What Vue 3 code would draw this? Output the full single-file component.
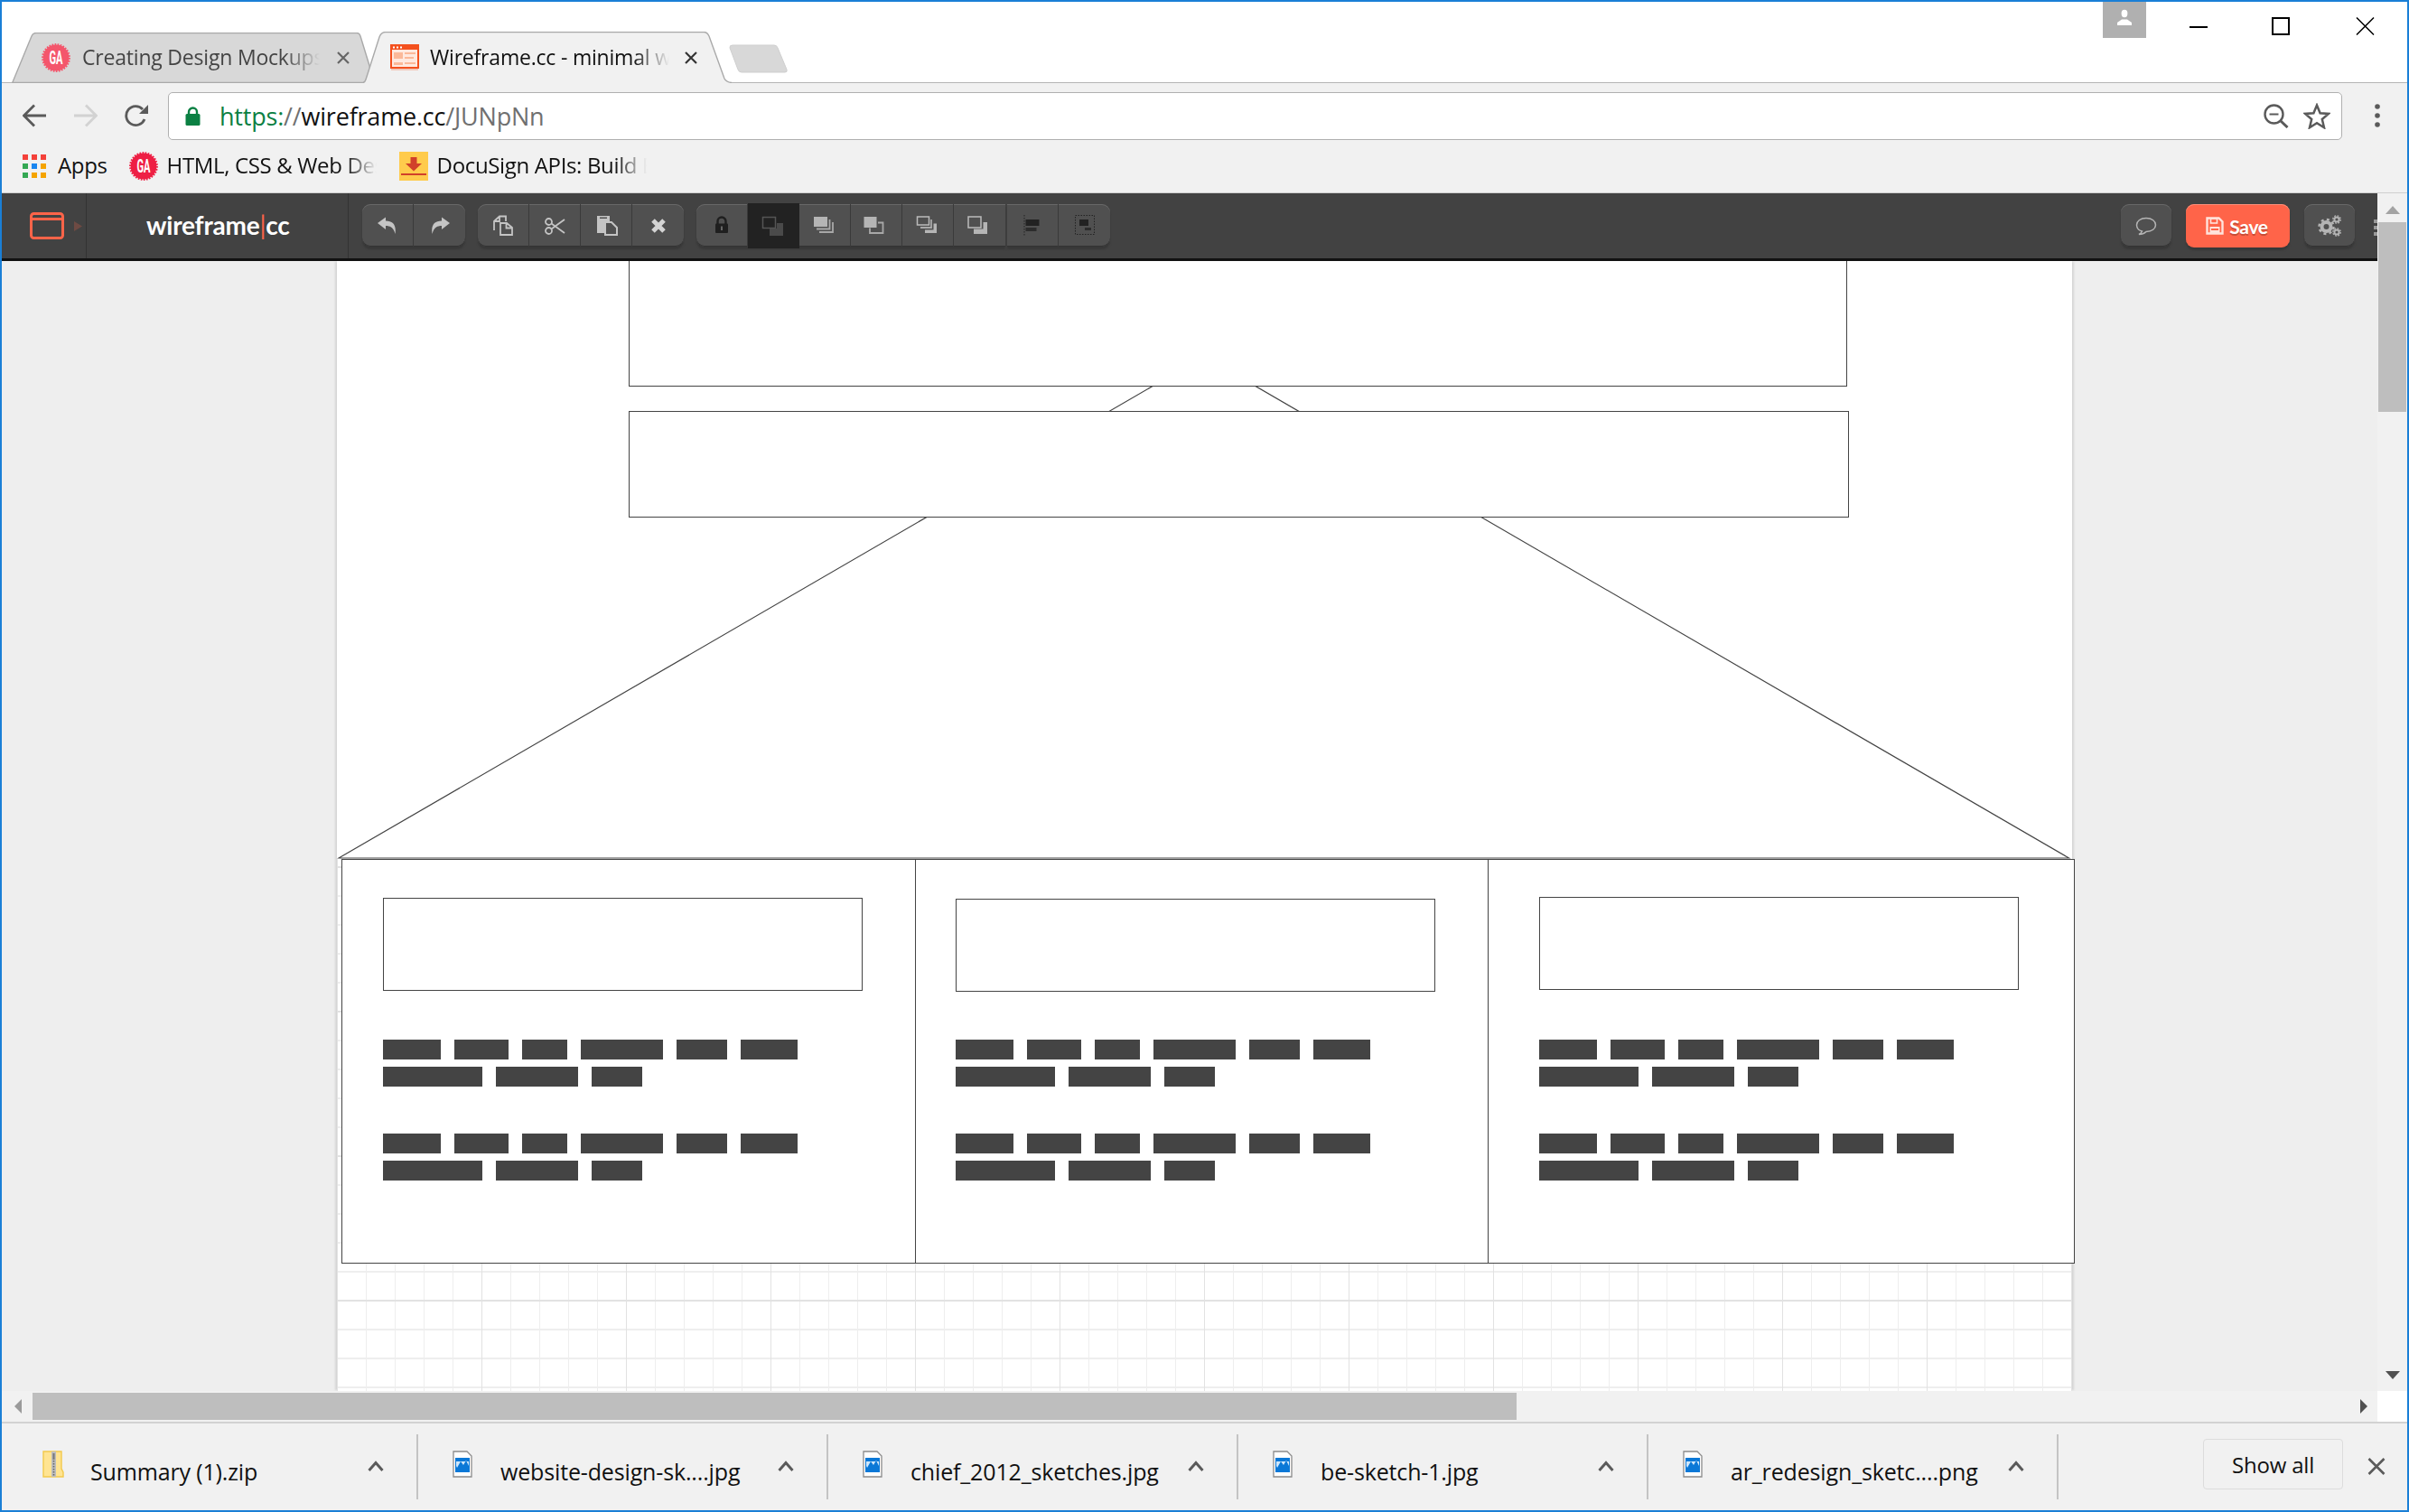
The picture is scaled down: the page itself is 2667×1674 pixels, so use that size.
<template>
  <div class="window">
    <!-- tab strip -->
    <div class="tabstrip">
      <div class="tab tab-off">
        <svg class="tab-bg" width="397" height="56" viewBox="0 0 397 56">
          <path d="M0.5 56 L22 4 Q23.5 0.5 27 0.5 H382 Q385 0.5 386 4 L397 40 L391 55.5 H0.5 Z" fill="#d8d8d8" stroke="#a9a9a9" stroke-width="1.4" />
        </svg>
        <svg class="fav-off" width="32" height="32" viewBox="0 0 32 32">
          <circle cx="16" cy="16" r="14.4" fill="#f4566c" stroke="#f4566c" stroke-width="3" stroke-dasharray="1.6 1.4" />
          <text x="16" y="23" text-anchor="middle" class="ga-text" textLength="15" lengthAdjust="spacingAndGlyphs">GA</text>
        </svg>
        <span class="tab-title title-off">Creating Design Mockups</span>
        <svg class="tab-x" width="14" height="14" viewBox="0 0 14 14"><path d="M1 1 13 13M13 1 1 13" stroke="#666" stroke-width="2.2" /></svg>
      </div>
      <div class="tab tab-on">
        <svg class="tab-bg" width="408" height="57" viewBox="0 0 408 57">
          <path d="M0 57 Q2 56 3 53 L18 6 Q20 0.5 25 0.5 H377 Q381 0.5 383 5 L400 52 Q402 56 408 56.5 V57 Z" fill="#f1f1f1" />
          <path d="M0 56.5 Q2 56 3 53 L18 6 Q20 0.5 25 0.5 H377 Q381 0.5 383 5 L400 52 Q402 56 408 56.5" fill="none" stroke="#a9a9a9" stroke-width="1.4" />
        </svg>
        <svg class="fav-on" width="32" height="30" viewBox="0 0 32 30">
          <rect x="1" y="1" width="30" height="25" fill="#ffe9df" stroke="#f4511e" stroke-width="2" />
          <rect x="1" y="1" width="30" height="5" fill="#f4511e" />
          <rect x="3" y="2.5" width="2" height="2" fill="#fff" /><rect x="7" y="2.5" width="2" height="2" fill="#fff" /><rect x="11" y="2.5" width="2" height="2" fill="#fff" />
          <rect x="4" y="9" width="10" height="7" fill="#fbb999" />
          <rect x="16" y="9" width="12" height="2" fill="#fbb999" /><rect x="16" y="14" width="10" height="2" fill="#fbb999" />
          <rect x="4" y="20" width="10" height="3" fill="#fbb999" /><rect x="16" y="20" width="12" height="2" fill="#fbb999" />
          <rect x="1" y="27" width="30" height="2" fill="#f2c9bb" />
        </svg>
        <span class="tab-title title-on">Wireframe.cc - minimal wireframing</span>
        <svg class="tab-x" width="14" height="14" viewBox="0 0 14 14"><path d="M1 1 13 13M13 1 1 13" stroke="#333" stroke-width="2.2" /></svg>
      </div>
      <svg class="newtab" width="66" height="32" viewBox="0 0 66 32">
        <path d="M1 4 Q0.5 1 4 1 H50 Q53 1 54 4 L64 28 Q65 31 62 31 H14 Q11 31 10 28 Z" fill="#d8d8d8" stroke="#cfcfcf" />
      </svg>
      <div class="winctl">
        <div class="user">
          <svg width="20" height="20" viewBox="0 0 20 20"><ellipse cx="10" cy="5" rx="3.4" ry="4.2" fill="#fff" /><path d="M2 18V15L7 11.5H13L18 15V18Z" fill="#fff" /></svg>
        </div>
        <svg class="ctl-min" width="20" height="2" viewBox="0 0 20 2"><rect width="20" height="2" fill="#000" /></svg>
        <svg class="ctl-max" width="20" height="20" viewBox="0 0 20 20"><rect x="1" y="1" width="18" height="18" fill="none" stroke="#000" stroke-width="2" /></svg>
        <svg class="ctl-close" width="21" height="20" viewBox="0 0 21 20"><path d="M1 0.5 20 19.5M20 0.5 1 19.5" stroke="#000" stroke-width="1.5" /></svg>
      </div>
    </div>

    <!-- address bar -->
    <div class="navbar">
      <svg class="nav-back" width="27" height="26" viewBox="0 0 27 26"><path d="M1.5 13H26M13 1.5 1.5 13 13 24.5" fill="none" stroke="#5a5a5a" stroke-width="2.8" /></svg>
      <svg class="nav-fwd" width="27" height="26" viewBox="0 0 27 26"><path d="M25.5 13H1M14 1.5 25.5 13 14 24.5" fill="none" stroke="#d2d2d2" stroke-width="2.8" /></svg>
      <svg class="nav-reload" width="28" height="26" viewBox="0 0 28 26"><path d="M23 17A10.5 10.5 0 1 1 21 6" fill="none" stroke="#5a5a5a" stroke-width="2.8" /><path d="M27 1V11H17Z" fill="#5a5a5a" /></svg>
      <div class="omnibox">
        <svg width="17" height="21" viewBox="0 0 17 21" class="lock"><path d="M4 9V6A4.5 4.5 0 0 1 13 6V9" fill="none" stroke="#0b8043" stroke-width="2.4" /><rect x="0.5" y="8" width="16" height="13" rx="1.5" fill="#0b8043" /></svg>
        <span class="url"><span class="u-green">https:</span><span class="u-grey">//</span>wireframe.cc<span class="u-grey">/JUNpNn</span></span>
        <svg class="omni-zoom" width="28" height="27" viewBox="0 0 28 27"><circle cx="11.5" cy="11.5" r="10" fill="none" stroke="#5a5a5a" stroke-width="2.4" /><path d="M6.5 11.5H16.5" stroke="#5a5a5a" stroke-width="2" /><path d="M18.5 18.5 26.5 26" stroke="#5a5a5a" stroke-width="3" /></svg>
        <svg class="omni-star" width="30" height="29" viewBox="0 0 30 29"><path d="M15 2.5 18.6 11.2 28 11.9 20.8 18 23 27.2 15 22.3 7 27.2 9.2 18 2 11.9 11.4 11.2Z" fill="none" stroke="#5a5a5a" stroke-width="2.5" /></svg>
      </div>
      <svg class="nav-menu" width="6" height="26" viewBox="0 0 6 26"><circle cx="3" cy="3" r="2.8" fill="#5a5a5a" /><circle cx="3" cy="13" r="2.8" fill="#5a5a5a" /><circle cx="3" cy="23" r="2.8" fill="#5a5a5a" /></svg>
    </div>

    <!-- bookmarks -->
    <div class="bookmarks">
      <div class="apps">
        <span v-for="(c, i) in appDots" :key="i" class="app-dot" :style="{ background: c }"></span>
      </div>
      <span class="bm-apps">Apps</span>
      <svg class="bm-ga" width="32" height="32" viewBox="0 0 32 32">
        <circle cx="16" cy="16" r="14.4" fill="#ee1f44" stroke="#ee1f44" stroke-width="3" stroke-dasharray="1.6 1.4" />
        <text x="16" y="23" text-anchor="middle" class="ga-text" textLength="15" lengthAdjust="spacingAndGlyphs">GA</text>
      </svg>
      <span class="bm-title bm-html">HTML, CSS &amp; Web Design</span>
      <svg class="bm-doc" width="32" height="32" viewBox="0 0 32 32">
        <rect width="32" height="32" fill="#ffcb4c" />
        <path d="M12.5 6H19.5V13H25L16 21.5 7 13H12.5Z" fill="#d1402a" />
        <rect x="2" y="24" width="28" height="2" fill="#d1402a" />
      </svg>
      <span class="bm-title bm-docu">DocuSign APIs: Build Better</span>
    </div>

    <div class="stage">
      <div class="main">
        <!-- wireframe.cc toolbar -->
        <div class="apptool">
          <div class="logo-cell">
            <svg width="38" height="30" viewBox="0 0 38 30"><rect x="1.5" y="1.5" width="35" height="27" rx="3" fill="none" stroke="#ff6449" stroke-width="3" /><rect x="2" y="6" width="34" height="3" fill="#ff6449" /></svg>
            <svg class="logo-tri" width="9" height="11" viewBox="0 0 9 11"><path d="M0 0 9 5.5 0 11Z" fill="#6e4a43" /></svg>
          </div>
          <div class="brand"><span class="brand-text">wireframe<span class="pipe">|</span>cc</span></div>
          <div class="groups">
            <div class="group rounded">
              <div class="tool"><svg width="32" height="32" viewBox="0 0 32 32"><path d="M5 13 14 6.5V10.5C22 10.5 26 15 24.5 25 23 19 20 16 14 16V20Z" class="ico" /></svg></div>
              <div class="tool"><svg width="32" height="32" viewBox="0 0 32 32"><path d="M27 13 18 6.5V10.5C10 10.5 6 15 7.5 25 9 19 12 16 18 16V20Z" class="ico" /></svg></div>
            </div>
            <div class="group rounded">
              <div class="tool"><svg width="32" height="32" viewBox="0 0 32 32"><path d="M6 21V11L12 5.5H19V11M13 13H20L26 18V26H13ZM19.5 13.5V18.5H25.5M6.5 11H12V6" class="line" /></svg></div>
              <div class="tool"><svg width="32" height="32" viewBox="0 0 32 32"><circle cx="9.5" cy="11.5" r="3.5" class="line" /><circle cx="9.5" cy="21.5" r="3.5" class="line" /><path d="M12.5 13.5 27 24M12.5 19.5 27 9" class="line" /></svg></div>
              <div class="tool"><svg width="32" height="32" viewBox="0 0 32 32"><rect x="6" y="5" width="14" height="19" class="ico" /><rect x="9" y="6.5" width="8" height="1.5" fill="#505050" /><path d="M15 12H22L28 18V26H15Z" fill="#505050" stroke="#c4c4c4" stroke-width="2" /></svg></div>
              <div class="tool"><svg width="32" height="32" viewBox="0 0 32 32"><path d="M10 10 22 22M22 10 10 22" stroke="#d4d4d4" stroke-width="5" /></svg></div>
            </div>
            <div class="group left">
              <div class="tool"><svg width="32" height="32" viewBox="0 0 32 32"><path d="M11.5 14V11A4.5 4.5 0 0 1 20.5 11V14" fill="none" stroke="#1f1f1f" stroke-width="2.4" /><rect x="9" y="13.5" width="14" height="10.5" rx="1" fill="#1f1f1f" /><rect x="15" y="16.5" width="2" height="4.5" fill="#666" /></svg></div>
              <div class="tool active"><svg width="32" height="32" viewBox="0 0 32 32"><path d="M14 19H19V13H26V27H11V19Z" fill="#4a4a4a" /><rect x="3.5" y="6.5" width="14" height="12" fill="none" stroke="#555" stroke-width="1.5" /></svg></div>
              <div class="tool"><svg width="32" height="32" viewBox="0 0 32 32"><rect x="4" y="6" width="15" height="11" fill="#b5b5b5" /><path d="M7 19.5H21.5V9M10 23H25V12" class="thin" /></svg></div>
              <div class="tool"><svg width="32" height="32" viewBox="0 0 32 32"><rect x="2.5" y="6" width="14" height="12" fill="#b5b5b5" /><path d="M18 12.5H23.5V24H9V18.5" class="thin" /></svg></div>
              <div class="tool"><svg width="32" height="32" viewBox="0 0 32 32"><rect x="4.5" y="6" width="13" height="9" fill="none" stroke="#bbb" stroke-width="1.5" /><path d="M8 18H20V9" class="thin" /><path d="M22.5 13.5H26V24H13V20.5H22.5Z" fill="#b5b5b5" /></svg></div>
              <div class="tool"><svg width="32" height="32" viewBox="0 0 32 32"><rect x="3" y="6" width="14" height="12" fill="none" stroke="#bbb" stroke-width="1.5" /><path d="M19.5 12H24V25H9V19.5H19.5Z" fill="#b5b5b5" /></svg></div>
            </div>
            <div class="group right">
              <div class="tool"><svg width="32" height="32" viewBox="0 0 32 32"><path d="M7 4V27" stroke="#222" stroke-width="1" stroke-dasharray="1.5 1.5" /><rect x="8.5" y="9" width="15" height="7" fill="#222" /><rect x="8.5" y="18" width="12" height="4" fill="#2c2c2c" /></svg></div>
              <div class="tool"><svg width="32" height="32" viewBox="0 0 32 32"><rect x="5.5" y="4.5" width="21" height="21" fill="none" stroke="#222" stroke-dasharray="1.5 1.5" /><rect x="10" y="9" width="10" height="7" fill="#222" /><rect x="16" y="18" width="7" height="3" fill="#2c2c2c" /></svg></div>
            </div>
          </div>
          <div class="actions">
            <div class="single"><svg width="30" height="30" viewBox="0 0 30 30"><path d="M15 6.5C8.5 6.5 4.5 10 4.5 14S7.5 20.5 10.5 21C10 22.5 9 23.5 7 24.5 10.5 24.5 13 23.5 15 21.5 21.5 21.5 25.5 18 25.5 14S21.5 6.5 15 6.5Z" fill="none" stroke="#b5b5b5" stroke-width="1.5" /></svg></div>
            <div class="save">
              <svg width="20" height="20" viewBox="0 0 20 20"><path d="M1.5 1.5H14.5L18.5 5.5V18.5H1.5Z" fill="none" stroke="#ffe3dc" stroke-width="2.4" /><rect x="5.5" y="2" width="7" height="5" fill="none" stroke="#ffe3dc" stroke-width="1.6" /><rect x="4.5" y="11" width="11" height="7" fill="#ffe3dc" /><rect x="6" y="13" width="8" height="2" fill="#ff6449" /></svg>
              <span>Save</span>
            </div>
            <div class="single gear">
              <svg width="26" height="24" viewBox="0 0 26 24">
                <circle cx="9.5" cy="13" r="5" fill="none" stroke="#b5b5b5" stroke-width="4" />
                <circle cx="9.5" cy="13" r="8" fill="none" stroke="#b5b5b5" stroke-width="2.4" stroke-dasharray="3 3.3" />
                <circle cx="21" cy="5" r="2.6" fill="none" stroke="#b5b5b5" stroke-width="2" />
                <circle cx="21" cy="5" r="4.2" fill="none" stroke="#b5b5b5" stroke-width="1.4" stroke-dasharray="1.8 1.5" />
                <circle cx="21" cy="19" r="2.6" fill="none" stroke="#b5b5b5" stroke-width="2" />
                <circle cx="21" cy="19" r="4.2" fill="none" stroke="#b5b5b5" stroke-width="1.4" stroke-dasharray="1.8 1.5" />
              </svg>
            </div>
            <div class="stub"><i></i><i></i><i></i></div>
          </div>
        </div>
        <div class="blackline"></div>

        <!-- canvas -->
        <div class="canvas">
          <div class="sheet">
            <div class="sheet-top"></div>
            <svg class="tri" width="1921" height="662" viewBox="0 0 1921 662">
              <path d="M2 661 960 105.5 1917.5 661Z" fill="#fff" stroke="#444" stroke-width="1.2" />
            </svg>
            <div class="shape rect-a"></div>
            <div class="shape rect-b"></div>
            <div class="frame">
              <div v-for="col in columns" :key="col.pad" class="frame-col" :style="{ width: col.w + 'px', paddingLeft: col.pad + 'px', paddingTop: col.top + 'px' }">
                <div class="shape col-box" :style="{ marginBottom: col.gap + 'px' }"></div>
                <div v-for="p in 2" :key="p" class="para">
                  <div v-for="(row, ri) in bars" :key="ri" class="bar-row">
                    <span v-for="(b, bi) in row" :key="bi" class="bar" :style="{ width: b + 'px' }"></span>
                  </div>
                </div>
              </div>
            </div>
          </div>
        </div>

        <!-- horizontal scrollbar -->
        <div class="hscroll">
          <svg width="10" height="16" viewBox="0 0 10 16"><path d="M9 0V16L1 8Z" fill="#9a9a9a" /></svg>
          <div class="hthumb"></div>
          <svg class="h-right" width="10" height="16" viewBox="0 0 10 16"><path d="M1 0V16L9 8Z" fill="#505050" /></svg>
        </div>
      </div>

      <!-- vertical scrollbar -->
      <div class="vscroll">
        <svg class="v-up" width="16" height="9" viewBox="0 0 16 9"><path d="M0 9H16L8 0Z" fill="#a3a3a3" /></svg>
        <div class="vthumb"></div>
        <svg class="v-down" width="16" height="9" viewBox="0 0 16 9"><path d="M0 0H16L8 9Z" fill="#505050" /></svg>
        <div class="corner"></div>
      </div>
    </div>

    <!-- downloads -->
    <div class="downloads">
      <div v-for="d in downloads" :key="d.name" class="dl">
        <svg v-if="d.zip" class="dl-ico" width="24" height="30" viewBox="0 0 24 30">
          <path d="M1 1H21V20L23 24V29H1Z" fill="#ffe492" stroke="#f2c94c" stroke-width="1.4" />
          <rect x="10" y="1" width="5" height="28" fill="#bdbdbd" />
          <rect x="11.5" y="3" width="2" height="7" fill="#777" />
          <path d="M12.5 11V28" stroke="#666" stroke-width="1.6" stroke-dasharray="1.5 1.5" />
        </svg>
        <svg v-else class="dl-ico" width="22" height="30" viewBox="0 0 22 30">
          <path d="M1 1H16L21 6V29H1Z" fill="#fff" stroke="#8c8c8c" stroke-width="1.3" />
          <rect x="3" y="8" width="16" height="16" fill="#0a78d7" />
          <path d="M5 19 9 12 12 16 15 11 18 17V12H4V17Z" fill="#cfe6fa" />
        </svg>
        <span class="dl-name">{{ d.name }}</span>
        <svg class="dl-chev" width="18" height="12" viewBox="0 0 18 12"><path d="M1.5 11 9 2.5 16.5 11" fill="none" stroke="#5a5a5a" stroke-width="3" /></svg>
      </div>
      <div class="showall">Show all</div>
      <svg class="dl-close" width="20" height="19" viewBox="0 0 20 19"><path d="M1.5 1 18.5 18M18.5 1 1.5 18" stroke="#5a5a5a" stroke-width="2.6" /></svg>
    </div>
  </div>
</template>

<script setup>
const appDots = [
  '#f4413a', '#f4413a', '#f4413a',
  '#34a853', '#1a86f0', '#f5a400',
  '#34a853', '#f5a400', '#f5a400',
]

const bars = [
  [64, 60, 50, 91, 56, 63],
  [110, 91, 56],
]

const columns = [
  { w: 636, pad: 46, top: 42, gap: 54 },
  { w: 634, pad: 44, top: 43, gap: 53 },
  { w: 648, pad: 56, top: 41, gap: 55 },
]

const downloads = [
  { name: 'Summary (1).zip', zip: true },
  { name: 'website-design-sk....jpg' },
  { name: 'chief_2012_sketches.jpg' },
  { name: 'be-sketch-1.jpg' },
  { name: 'ar_redesign_sketc....png' },
]
</script>

<style>
html,
body {
  margin: 0;
  padding: 0;
}
</style>

<style scoped>
.window {
  width: 2667px;
  height: 1674px;
  box-sizing: border-box;
  border: 2px solid #1a7fd6;
  display: flex;
  flex-direction: column;
  overflow: hidden;
  background: #fff;
  font-family: "Open Sans", "Noto Sans", sans-serif;
  color: #111;
}

/* tabs */
.tabstrip {
  height: 90px;
  flex: none;
  box-sizing: border-box;
  border-bottom: 1px solid #b4b4b4;
  display: flex;
  align-items: flex-end;
  padding-left: 11px;
  position: relative;
}
.tab {
  position: relative;
  display: flex;
  align-items: center;
  height: 56px;
  margin-bottom: -1px;
}
.tab-bg {
  position: absolute;
  left: 0;
  bottom: 0;
}
.tab-off {
  width: 397px;
}
.tab-on {
  width: 408px;
  margin-left: -8px;
}
.fav-off,
.fav-on,
.tab-title,
.tab-x {
  position: relative;
}
.fav-off {
  margin-left: 33px;
}
.fav-on {
  margin-left: 30px;
}
.tab-title {
  font-size: 23px;
  line-height: 30px;
  margin-bottom: 2px;
  white-space: nowrap;
  overflow: hidden;
  letter-spacing: -0.2px;
  -webkit-mask-image: linear-gradient(90deg, #000 85%, transparent);
  mask-image: linear-gradient(90deg, #000 85%, transparent);
}
.title-off {
  width: 263px;
  margin-left: 13px;
  color: #444;
}
.title-on {
  width: 265px;
  margin-left: 12px;
}
.tab-x {
  margin-left: 19px;
}
.title-on + .tab-x {
  margin-left: 17px;
}
.ga-text {
  font-family: "Roboto", sans-serif;
  font-weight: 700;
  font-size: 20px;
  fill: #fff;
}
.newtab {
  margin-left: -3px;
  margin-bottom: 10px;
}
.winctl {
  margin-left: auto;
  align-self: flex-start;
  display: flex;
  align-items: flex-start;
  padding-right: 36px;
}
.user {
  width: 48px;
  height: 40px;
  background: #b0b0b0;
  display: flex;
  justify-content: center;
  padding-top: 8px;
  box-sizing: border-box;
}
.ctl-min {
  margin: 27px 0 0 48px;
}
.ctl-max {
  margin: 17px 0 0 71px;
}
.ctl-close {
  margin: 17px 0 0 73px;
}

/* address bar */
.navbar {
  height: 63px;
  flex: none;
  box-sizing: border-box;
  padding-top: 9px;
  background: #f1f1f1;
  display: flex;
  align-items: center;
  position: relative;
}
.nav-back {
  margin-left: 23px;
}
.nav-fwd {
  margin-left: 29px;
}
.nav-reload {
  margin-left: 29px;
}
.omnibox {
  margin-left: 21px;
  width: 2407px;
  height: 53px;
  box-sizing: border-box;
  background: #fff;
  border: 1.5px solid #b0b0b0;
  border-radius: 5px;
  display: flex;
  align-items: center;
  padding-left: 18px;
}
.url {
  margin-left: 21px;
  font-size: 27px;
  letter-spacing: -0.2px;
  white-space: nowrap;
}
.u-green {
  color: #0b8043;
}
.u-grey {
  color: #707070;
}
.omni-zoom {
  margin-left: auto;
}
.omni-star {
  margin: 0 12px 0 16px;
}
.nav-menu {
  margin-left: 36px;
}

/* bookmarks */
.bookmarks {
  height: 58px;
  flex: none;
  background: #f1f1f1;
  display: flex;
  align-items: center;
  padding-left: 23px;
}
.apps {
  display: grid;
  grid-template-columns: repeat(3, 6px);
  grid-auto-rows: 6px;
  gap: 4px;
}
.app-dot {
  display: block;
}
.bm-apps,
.bm-title {
  font-size: 24px;
  line-height: 30px;
  margin-bottom: 2px;
  letter-spacing: -0.35px;
  white-space: nowrap;
}
.bm-apps {
  margin-left: 13px;
}
.bm-ga {
  margin-left: 24px;
}
.bm-title {
  width: 232px;
  margin-left: 10px;
  overflow: hidden;
  -webkit-mask-image: linear-gradient(90deg, #000 85%, transparent);
  mask-image: linear-gradient(90deg, #000 85%, transparent);
}
.bm-doc {
  margin-left: 25px;
}

/* main stage */
.stage {
  flex: 1;
  min-height: 0;
  display: flex;
}
.main {
  width: 2630px;
  display: flex;
  flex-direction: column;
}
.apptool {
  height: 73px;
  flex: none;
  box-sizing: border-box;
  border-top: 1px solid #cfcfcf;
  background: #424242;
  display: flex;
  align-items: stretch;
}
.blackline {
  height: 3px;
  flex: none;
  background: #111;
}
.logo-cell {
  width: 94px;
  box-sizing: border-box;
  border-right: 1px solid #333;
  display: flex;
  align-items: center;
  padding-left: 31px;
}
.logo-tri {
  margin-left: 11px;
}
.brand {
  width: 290px;
  box-sizing: border-box;
  border-right: 1px solid #333;
  display: flex;
  align-items: center;
  padding-left: 66px;
  padding-bottom: 2px;
}
.brand-text {
  font-family: "Lato", "Open Sans", sans-serif;
  font-weight: 700;
  font-size: 28px;
  color: #fff;
  letter-spacing: -0.2px;
}
.pipe {
  color: #ff6449;
  font-weight: 400;
}
.groups {
  display: flex;
  padding-left: 15px;
  padding-top: 12px;
  gap: 14px;
}
.group {
  display: flex;
  height: 47px;
  background: #505050;
  box-shadow: inset 0 1px 0 #686868, inset 0 -1px 0 #333, 0 3px 2px #383838;
}
.group.rounded {
  border-radius: 9px;
}
.group.left {
  border-radius: 9px 0 0 9px;
}
.group.right {
  border-radius: 0 9px 9px 0;
  margin-left: -12px;
}
.tool {
  width: 57px;
  box-sizing: border-box;
  border-right: 1px solid #3a3a3a;
  display: flex;
  align-items: center;
  justify-content: center;
}
.tool:last-child {
  border-right: 0;
}
.tool.active {
  background: #222;
  border-right: 0;
  height: 50px;
  margin-top: -1px;
  position: relative;
}
.ico {
  fill: #c4c4c4;
}
.line {
  fill: none;
  stroke: #c4c4c4;
  stroke-width: 1.8;
}
.thin {
  fill: none;
  stroke: #a8a8a8;
  stroke-width: 1.8;
}
.actions {
  margin-left: auto;
  display: flex;
  padding-top: 12px;
}
.single {
  width: 56px;
  height: 47px;
  box-sizing: border-box;
  background: #505050;
  border-radius: 9px;
  display: flex;
  align-items: center;
  justify-content: center;
  box-shadow: inset 0 1px 0 #686868, inset 0 -1px 0 #333, 0 3px 2px #383838;
}
.save {
  width: 115px;
  height: 48px;
  box-sizing: border-box;
  padding-right: 2px;
  margin-left: 16px;
  border-radius: 9px;
  background: #ff6449;
  color: #fff;
  box-shadow: inset 0 1px 0 #ff8f7a, 0 3px 2px #383838;
  font-family: "Lato", "Open Sans", sans-serif;
  font-weight: 700;
  font-size: 21px;
  letter-spacing: -0.3px;
  display: flex;
  align-items: center;
  justify-content: center;
  gap: 6px;
  text-shadow: 0 2px 0 #c94d37;
}
.gear {
  margin-left: 16px;
}
.stub {
  margin-left: 21px;
  width: 4px;
  display: flex;
  flex-direction: column;
  gap: 3px;
  padding-top: 17px;
}
.stub i {
  display: block;
  height: 4px;
  background: #999;
}

/* canvas */
.canvas {
  flex: 1;
  min-height: 0;
  background: #eee;
  overflow: hidden;
  padding-left: 371px;
}
.sheet {
  width: 1921px;
  height: 100%;
  position: relative;
  background-color: #fff;
  background-image:
    linear-gradient(#e2e2e2 2px, transparent 2px),
    linear-gradient(90deg, #e2e2e2 1px, transparent 1px),
    linear-gradient(#eee 2px, transparent 2px),
    linear-gradient(90deg, #eee 1px, transparent 1px);
  background-size: 160px 160px, 160px 160px, 32px 32px, 32px 32px;
  background-position: 0 30px, 0 0, 0 30px, 0 0;
  box-shadow: -3px 0 2px -1px #d5d5d5, 3px 0 2px -1px #d5d5d5;
}
.sheet-top {
  height: 662px;
  background: #fff;
}
/* wireframe shapes sit on a free canvas */
.tri {
  position: absolute;
  left: 0;
  top: 0;
}
.shape {
  box-sizing: border-box;
  border: 1px solid #444;
  background: #fff;
}
.rect-a {
  position: absolute;
  left: 323px;
  top: -10px;
  width: 1349px;
  height: 149px;
}
.rect-b {
  position: absolute;
  left: 323px;
  top: 166px;
  width: 1351px;
  height: 118px;
}
.frame {
  position: absolute;
  left: 5px;
  top: 662px;
  height: 448px;
  display: flex;
  box-sizing: border-box;
  border: 1px solid #444;
  background: #fff;
}
.frame-col {
  box-sizing: border-box;
  border-right: 1px solid #444;
}
.frame-col:first-child {
  margin-left: -1px;
}
.frame-col:last-child {
  border-right: 0;
}
.col-box {
  width: 531px;
  height: 103px;
}
.para {
  display: flex;
  flex-direction: column;
  gap: 8px;
  margin-bottom: 52px;
}
.bar-row {
  display: flex;
  gap: 15px;
}
.bar {
  height: 22px;
  background: #444;
}

/* scrollbars */
.hscroll {
  height: 34px;
  flex: none;
  background: #f1f1f1;
  display: flex;
  align-items: center;
  padding-left: 13px;
}
.hthumb {
  width: 1643px;
  height: 30px;
  margin-left: 11px;
  background: #bebebe;
}
.h-right {
  margin-left: auto;
  margin-right: 10px;
}
.vscroll {
  flex: 1;
  background: #f1f1f1;
  display: flex;
  flex-direction: column;
  align-items: center;
  padding-top: 15px;
  box-shadow: inset 0 1px 0 #cfcfcf;
}
.vthumb {
  width: 31px;
  height: 210px;
  margin-top: 9px;
  background: #bebebe;
}
.v-down {
  margin-top: auto;
  margin-bottom: 13px;
}
.corner {
  width: 100%;
  height: 34px;
  flex: none;
  background: #fff;
}

/* downloads */
.downloads {
  height: 98px;
  flex: none;
  box-sizing: border-box;
  border-top: 2px solid #d2d2d2;
  background: #f1f1f1;
  display: flex;
  align-items: center;
  padding-left: 7px;
  font-size: 24px;
}
.dl {
  width: 454px;
  height: 72px;
  box-sizing: border-box;
  border-right: 2px solid #c4c4c4;
  display: flex;
  align-items: center;
  position: relative;
  padding-left: 38px;
  flex: none;
}
.dl-ico {
  margin-bottom: 6px;
  flex: none;
}
.dl-name {
  position: absolute;
  left: 91px;
  top: 26px;
  font-size: 25px;
  letter-spacing: -0.15px;
  line-height: 30px;
  white-space: nowrap;
}
.dl-chev {
  position: absolute;
  left: 398px;
  top: 29px;
}
.showall {
  width: 155px;
  height: 56px;
  box-sizing: border-box;
  margin-left: 160px;
  margin-bottom: 6px;
  border: 1px solid #dcdcdc;
  border-radius: 4px;
  display: flex;
  align-items: center;
  justify-content: center;
  letter-spacing: -0.2px;
}
.dl-close {
  margin-left: 27px;
  margin-bottom: 2px;
}
</style>
